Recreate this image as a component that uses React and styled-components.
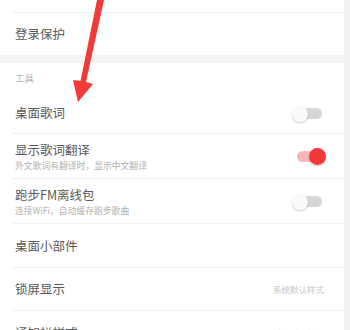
import React from 'react';
import styled, { createGlobalStyle } from 'styled-components';

const GlobalStyle = createGlobalStyle`
  html, body {
    margin: 0;
    padding: 0;
    background: #ffffff;
    font-family: "Noto Sans CJK SC", "Noto Sans", sans-serif;
  }
`;

const Page = styled.div`
  position: relative;
  display: flex;
  width: 350px;
  height: 330px;
  overflow: hidden;
  background: #ffffff;
`;

const List = styled.div`
  width: 344px;
  display: flex;
  flex-direction: column;
`;

const ScrollStrip = styled.div`
  flex: 1;
  background: #f0f0f0;
`;

const Row = styled.div`
  box-sizing: border-box;
  height: ${(p) => p.$h}px;
  margin-left: 13px;
  padding: 0 20px 0 2px;
  display: flex;
  align-items: center;
  justify-content: space-between;
  border-bottom: ${(p) => (p.$last ? 'none' : '1px solid #efefef')};
  flex-shrink: 0;
`;

const Band = styled.div`
  height: 8px;
  background: #f3f3f3;
  flex-shrink: 0;
`;

const SectionHeader = styled.div`
  box-sizing: border-box;
  height: 30px;
  padding-left: 15px;
  display: flex;
  align-items: center;
  font-size: 9.5px;
  color: #b4b4b4;
  flex-shrink: 0;
`;

const TextBlock = styled.div`
  display: flex;
  flex-direction: column;
  gap: 0;
`;

const Title = styled.span`
  font-size: 12.5px;
  line-height: 18px;
  color: #585858;
`;

const Subtitle = styled.span`
  font-size: 8.8px;
  line-height: 13px;
  color: #b0b0b0;
`;

const Value = styled.span`
  font-size: 8.5px;
  color: #c4c4c4;
`;

const Switch = styled.div`
  position: relative;
  width: 32px;
  height: 17px;
  flex-shrink: 0;
`;

const Track = styled.div`
  position: absolute;
  left: 5px;
  right: 2px;
  top: 3px;
  height: 11px;
  border-radius: 6px;
  background: ${(p) => (p.$on ? '#f9b9b9' : '#d6d6d6')};
`;

const Knob = styled.div`
  position: absolute;
  top: ${(p) => (p.$on ? 0 : 1)}px;
  ${(p) => (p.$on ? 'right: -2px;' : 'left: 0;')}
  width: ${(p) => (p.$on ? 17 : 16)}px;
  height: ${(p) => (p.$on ? 17 : 16)}px;
  border-radius: 50%;
  background: ${(p) => (p.$on ? '#f23838' : '#fafafa')};
  box-shadow: 0 1px 2px rgba(0, 0, 0, 0.22);
`;

const ArrowLayer = styled.svg`
  position: absolute;
  left: 0;
  top: 0;
  width: 350px;
  height: 330px;
  pointer-events: none;
`;

const Toggle = ({ on }) => (
  <Switch>
    <Track $on={on} />
    <Knob $on={on} />
  </Switch>
);

export default function App() {
  return (
    <Page>
      <GlobalStyle />
      <List>
        <Row $h={13} />
        <Row $h={42} $last>
          <Title>登录保护</Title>
        </Row>
        <Band />
        <SectionHeader>工具</SectionHeader>
        <Row $h={41}>
          <Title>桌面歌词</Title>
          <Toggle on={false} />
        </Row>
        <Row $h={45}>
          <TextBlock>
            <Title>显示歌词翻译</Title>
            <Subtitle>外文歌词有翻译时，显示中文翻译</Subtitle>
          </TextBlock>
          <Toggle on />
        </Row>
        <Row $h={45}>
          <TextBlock>
            <Title>跑步FM离线包</Title>
            <Subtitle>连接WiFi，自动缓存跑步歌曲</Subtitle>
          </TextBlock>
          <Toggle on={false} />
        </Row>
        <Row $h={44}>
          <Title>桌面小部件</Title>
        </Row>
        <Row $h={43}>
          <Title>锁屏显示</Title>
          <Value>系统默认样式</Value>
        </Row>
        <Row $h={44} $last>
          <Title>通知栏样式</Title>
          <Value>系统默认样式</Value>
        </Row>
      </List>
      <ScrollStrip />
      <ArrowLayer viewBox="0 0 350 330">
        <polygon
          points="97,0 104,0 86,82 93,84 78,102 73,80 80.5,81"
          fill="#f23a3a"
        />
      </ArrowLayer>
    </Page>
  );
}
